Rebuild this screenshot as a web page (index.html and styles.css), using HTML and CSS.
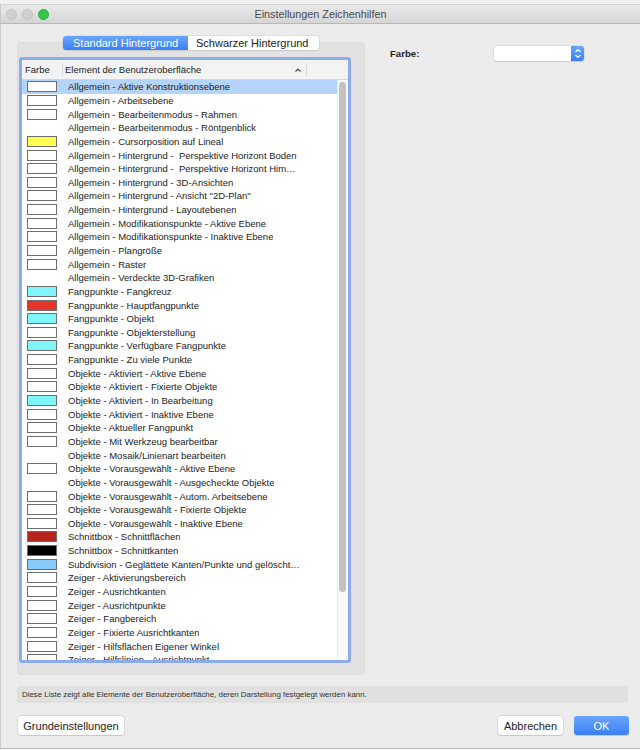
FILE: index.html
```html
<!DOCTYPE html>
<html lang="de">
<head>
<meta charset="utf-8">
<title>Einstellungen Zeichenhilfen</title>
<link rel="stylesheet" href="styles.css">
</head>
<body>
<div class="window">
  <div class="titlebar">
    <div class="lights">
      <span class="light grey"></span>
      <span class="light grey"></span>
      <span class="light green"></span>
    </div>
    <div class="title">Einstellungen Zeichenhilfen</div>
    <div></div>
  </div>

  <div class="content">
    <div class="top">
      <div class="group-wrap">
        <div class="segmented">
          <span class="seg active">Standard Hintergrund</span>
          <span class="seg">Schwarzer Hintergrund</span>
        </div>
        <div class="group">
          <div class="list">
            <div class="list-header">
              <div class="hcell hcolor">Farbe</div>
              <div class="hcell hname">Element der Benutzeroberfläche
                <svg class="sort" width="8" height="6" viewBox="0 0 8 6"><polyline points="1.5,4.5 4,2 6.5,4.5" fill="none" stroke="#444" stroke-width="1.1"/></svg>
              </div>
              <div class="hcell hrest"></div>
            </div>
            <div class="list-body">
              <div class="rows">
                <div class="row selected"><span class="sw white"></span><span class="txt">Allgemein - Aktive Konstruktionsebene</span></div>
                <div class="row"><span class="sw white"></span><span class="txt">Allgemein - Arbeitsebene</span></div>
                <div class="row"><span class="sw white"></span><span class="txt">Allgemein - Bearbeitenmodus - Rahmen</span></div>
                <div class="row"><span class="sw none"></span><span class="txt">Allgemein - Bearbeitenmodus - Röntgenblick</span></div>
                <div class="row"><span class="sw yellow"></span><span class="txt">Allgemein - Cursorposition auf Lineal</span></div>
                <div class="row"><span class="sw white"></span><span class="txt">Allgemein - Hintergrund -  Perspektive Horizont Boden</span></div>
                <div class="row"><span class="sw white"></span><span class="txt">Allgemein - Hintergrund -  Perspektive Horizont Him…</span></div>
                <div class="row"><span class="sw white"></span><span class="txt">Allgemein - Hintergrund - 3D-Ansichten</span></div>
                <div class="row"><span class="sw white"></span><span class="txt">Allgemein - Hintergrund - Ansicht "2D-Plan"</span></div>
                <div class="row"><span class="sw white"></span><span class="txt">Allgemein - Hintergrund - Layoutebenen</span></div>
                <div class="row"><span class="sw white"></span><span class="txt">Allgemein - Modifikationspunkte - Aktive Ebene</span></div>
                <div class="row"><span class="sw white"></span><span class="txt">Allgemein - Modifikationspunkte - Inaktive Ebene</span></div>
                <div class="row"><span class="sw white"></span><span class="txt">Allgemein - Plangröße</span></div>
                <div class="row"><span class="sw white"></span><span class="txt">Allgemein - Raster</span></div>
                <div class="row"><span class="sw none"></span><span class="txt">Allgemein - Verdeckte 3D-Grafiken</span></div>
                <div class="row"><span class="sw cyan"></span><span class="txt">Fangpunkte - Fangkreuz</span></div>
                <div class="row"><span class="sw red"></span><span class="txt">Fangpunkte - Hauptfangpunkte</span></div>
                <div class="row"><span class="sw cyan"></span><span class="txt">Fangpunkte - Objekt</span></div>
                <div class="row"><span class="sw white"></span><span class="txt">Fangpunkte - Objekterstellung</span></div>
                <div class="row"><span class="sw cyan"></span><span class="txt">Fangpunkte - Verfügbare Fangpunkte</span></div>
                <div class="row"><span class="sw white"></span><span class="txt">Fangpunkte - Zu viele Punkte</span></div>
                <div class="row"><span class="sw white"></span><span class="txt">Objekte - Aktiviert - Aktive Ebene</span></div>
                <div class="row"><span class="sw white"></span><span class="txt">Objekte - Aktiviert - Fixierte Objekte</span></div>
                <div class="row"><span class="sw cyan"></span><span class="txt">Objekte - Aktiviert - In Bearbeitung</span></div>
                <div class="row"><span class="sw white"></span><span class="txt">Objekte - Aktiviert - Inaktive Ebene</span></div>
                <div class="row"><span class="sw white"></span><span class="txt">Objekte - Aktueller Fangpunkt</span></div>
                <div class="row"><span class="sw white"></span><span class="txt">Objekte - Mit Werkzeug bearbeitbar</span></div>
                <div class="row"><span class="sw none"></span><span class="txt">Objekte - Mosaik/Linienart bearbeiten</span></div>
                <div class="row"><span class="sw white"></span><span class="txt">Objekte - Vorausgewählt - Aktive Ebene</span></div>
                <div class="row"><span class="sw none"></span><span class="txt">Objekte - Vorausgewählt - Ausgecheckte Objekte</span></div>
                <div class="row"><span class="sw white"></span><span class="txt">Objekte - Vorausgewählt - Autom. Arbeitsebene</span></div>
                <div class="row"><span class="sw white"></span><span class="txt">Objekte - Vorausgewählt - Fixierte Objekte</span></div>
                <div class="row"><span class="sw white"></span><span class="txt">Objekte - Vorausgewählt - Inaktive Ebene</span></div>
                <div class="row"><span class="sw darkred"></span><span class="txt">Schnittbox - Schnittflächen</span></div>
                <div class="row"><span class="sw black"></span><span class="txt">Schnittbox - Schnittkanten</span></div>
                <div class="row"><span class="sw lightblue"></span><span class="txt">Subdivision - Geglättete Kanten/Punkte und gelöscht…</span></div>
                <div class="row"><span class="sw white"></span><span class="txt">Zeiger - Aktivierungsbereich</span></div>
                <div class="row"><span class="sw white"></span><span class="txt">Zeiger - Ausrichtkanten</span></div>
                <div class="row"><span class="sw white"></span><span class="txt">Zeiger - Ausrichtpunkte</span></div>
                <div class="row"><span class="sw white"></span><span class="txt">Zeiger - Fangbereich</span></div>
                <div class="row"><span class="sw white"></span><span class="txt">Zeiger - Fixierte Ausrichtkanten</span></div>
                <div class="row"><span class="sw white"></span><span class="txt">Zeiger - Hilfsflächen Eigener Winkel</span></div>
                <div class="row"><span class="sw white"></span><span class="txt">Zeiger - Hilfslinien - Ausrichtpunkt</span></div>
              </div>
              <div class="scrollbar"><div class="thumb"></div></div>
            </div>
          </div>
        </div>
      </div>

      <div class="side">
        <div class="field">
          <span class="label">Farbe:</span>
          <div class="popup">
            <div class="popup-value"></div>
            <div class="popup-arrows">
              <svg width="8" height="11" viewBox="0 0 8 11"><polyline points="1.5,4 4,1.5 6.5,4" fill="none" stroke="#fff" stroke-width="1.2"/><polyline points="1.5,7 4,9.5 6.5,7" fill="none" stroke="#fff" stroke-width="1.2"/></svg>
            </div>
          </div>
        </div>
      </div>
    </div>

    <div class="info">Diese Liste zeigt alle Elemente der Benutzeroberfläche, deren Darstellung festgelegt werden kann.</div>

    <div class="buttons">
      <button class="btn btn-defaults">Grundeinstellungen</button>
      <div class="spacer"></div>
      <button class="btn btn-cancel">Abbrechen</button>
      <button class="btn btn-ok">OK</button>
    </div>
  </div>
</div>
</body>
</html>
```

FILE: styles.css
```css
* { box-sizing: border-box; }
html, body { margin: 0; padding: 0; }
body {
  width: 640px;
  height: 750px;
  overflow: hidden;
  background: #f1f1f1;
  font-family: "Liberation Sans", Arial, sans-serif;
  color: #222;
}

.window {
  height: 745px;
  margin-top: 4px;
  border-top: 1px solid #d2d2d2;
  border-left: 1px solid #c9c9c9;
  border-bottom: 1px solid #bdbdbd;
  background: #ececec;
  display: flex;
  flex-direction: column;
}

/* title bar */
.titlebar {
  height: 19px;
  flex: none;
  display: grid;
  grid-template-columns: 1fr auto 1fr;
  align-items: center;
  background: linear-gradient(#e9e9e9, #d5d5d5);
  border-bottom: 1px solid #b8b8b8;
}
.lights {
  display: flex;
  gap: 5px;
  padding-left: 5px;
  align-items: center;
}
.light {
  width: 11px;
  height: 11px;
  border-radius: 50%;
}
.light.grey { background: #d0d0d0; border: 1px solid #c0c0c0; }
.light.green { background: #34c749; border: 1px solid #2aad3c; }
.title {
  font-size: 10.8px;
  color: #4b4b4b;
}

/* content */
.content {
  flex: 1;
  display: flex;
  flex-direction: column;
  padding: 12px 11px 0 16px;
}
.top {
  display: flex;
  align-items: flex-start;
}
.group-wrap {
  width: 348px;
  display: flex;
  flex-direction: column;
  align-items: center;
}
.segmented {
  position: relative;
  z-index: 1;
  display: flex;
  height: 14px;
  border-radius: 3px;
  background: #fff;
  box-shadow: 0 0 0 0.5px #cfcfcf, 0 1px 1px rgba(0,0,0,0.12);
  font-size: 11px;
  line-height: 14px;
  margin-bottom: -8px;
}
.seg {
  padding: 0 0 0 10px;
  color: #222;
  white-space: nowrap;
}
.seg.active {
  width: 125px;
  border-radius: 3px 0 0 3px;
  background: linear-gradient(#6aa6fb, #3a7ef6);
  color: #fff;
}
.seg:not(.active) { width: 131px; padding-left: 8px; }

.group {
  width: 348px;
  height: 633px;
  background: #e2e2e2;
  border: 1px solid #dadada;
  border-radius: 4px;
  padding: 14px 0 0 1px;
}

/* list */
.list {
  width: 332px;
  height: 606px;
  border: 3px solid #8cabea;
  border-radius: 3px;
  background: #fff;
  display: flex;
  flex-direction: column;
  overflow: hidden;
}
.list-header {
  height: 20px;
  flex: none;
  display: flex;
  background: #f3f3f3;
  border-bottom: 1px solid #d6d6d6;
  font-size: 9.5px;
}
.hcell {
  display: flex;
  align-items: center;
  white-space: nowrap;
}
.hcolor {
  width: 41px;
  padding-left: 3px;
  border-right: 1px solid #dadada;
  margin: 3px 0;
}
.hname {
  width: 244px;
  padding-left: 2px;
  border-right: 1px solid #dadada;
  margin: 3px 0;
  position: relative;
}
.sort {
  position: absolute;
  right: 4px;
  top: 4px;
}
.hrest { flex: 1; }

.list-body {
  flex: 1;
  display: flex;
  overflow: hidden;
}
.rows {
  flex: 1;
  overflow: hidden;
}
.row {
  height: 13.65px;
  display: flex;
  align-items: center;
  font-size: 9.5px;
  white-space: pre;
}
.row.selected { background: #b4d4fc; }
.sw {
  width: 30px;
  height: 11px;
  margin-left: 5px;
  margin-right: 11px;
  flex: none;
  border: 1px solid #6d6d6d;
}
.sw.none { visibility: hidden; }
.sw.white { background: #fff; }
.sw.yellow { background: #ffff4f; }
.sw.cyan { background: #80f5fb; }
.sw.red { background: #e6342a; }
.sw.darkred { background: #b6261d; }
.sw.black { background: #000; }
.sw.lightblue { background: #86cafa; }
.txt { overflow: hidden; }

.scrollbar {
  width: 11px;
  flex: none;
  background: #fafafa;
  border-left: 1px solid #ececec;
  padding: 2px 0 0 1px;
}
.thumb {
  width: 7px;
  height: 510px;
  border-radius: 4px;
  background: #c2c2c2;
}

/* right side */
.side {
  margin-left: 25px;
  padding-top: 10px;
}
.field {
  display: flex;
  align-items: center;
}
.label {
  width: 104px;
  font-size: 9.6px;
  font-weight: bold;
  color: #222;
}
.popup {
  width: 90px;
  height: 15px;
  display: flex;
  border-radius: 3px;
  background: #fff;
  box-shadow: 0 0 0 0.5px #cdcdcd, 0 1px 1px rgba(0,0,0,0.12);
  overflow: hidden;
}
.popup-value { flex: 1; }
.popup-arrows {
  width: 13px;
  display: flex;
  align-items: center;
  justify-content: center;
  background: linear-gradient(#6aa6fb, #3a7ef6);
}

/* info */
.info {
  margin-top: 11px;
  width: 611px;
  height: 17px;
  padding-left: 5px;
  display: flex;
  align-items: center;
  background: #e0e0e0;
  border-radius: 3px;
  font-size: 7.9px;
  color: #333;
}

/* buttons */
.buttons {
  margin-top: 13px;
  display: flex;
  align-items: center;
  width: 612px;
}
.spacer { flex: 1; }
.btn {
  height: 19px;
  padding: 0;
  font-family: "Liberation Sans", Arial, sans-serif;
  font-size: 11px;
  color: #222;
  background: #fff;
  border: none;
  border-radius: 3px;
  box-shadow: 0 0 0 0.5px #c6c6c6, 0 1px 1px rgba(0,0,0,0.15);
}
.btn-defaults { width: 106px; margin-left: 1px; }
.btn-cancel { width: 65px; }
.btn-ok {
  width: 55px;
  margin-left: 11px;
  color: #fff;
  background: linear-gradient(#6aa6fb, #3a7ef6);
  box-shadow: 0 1px 1px rgba(0,0,0,0.15);
}
```
